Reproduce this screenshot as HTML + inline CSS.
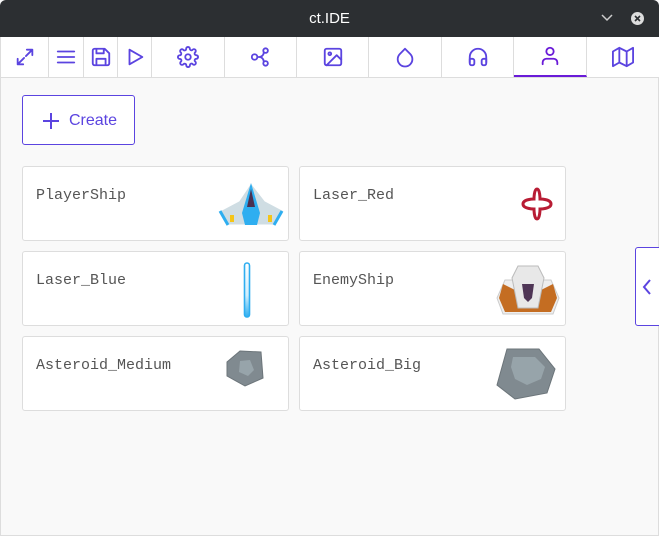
<!DOCTYPE html><html><head><style>
*{margin:0;padding:0;box-sizing:border-box}
body{width:659px;height:536px;background:#f9f9f9;font-family:"Liberation Sans",sans-serif;position:relative;overflow:hidden}
.title{position:absolute;left:0;top:0;width:659px;height:37px;background:#2c2f32;border-radius:6px 6px 0 0;color:#fff;font-size:15px;text-align:center;line-height:37px}
.tabs{position:absolute;top:37px;left:0;width:659px;height:41px;background:#fff;border-bottom:1px solid #ddd}
.t{position:absolute;top:0;height:40px;border-right:1px solid #ddd;display:flex;align-items:center;justify-content:center}
.t svg{width:22px;height:22px;fill:none;stroke:#5b44e0;stroke-width:2;stroke-linecap:round;stroke-linejoin:round}
.card{position:absolute;width:267px;height:75px;background:#fff;border:1px solid #ddd;border-radius:3px}
.card span{position:absolute;left:13px;top:20px;font-family:"Liberation Mono","DejaVu Sans Mono",monospace;font-size:15px;color:#555}
.card svg{position:absolute;right:4px;top:12px}
</style></head><body>
<div class="title">ct.IDE
<svg style="position:absolute;left:601px;top:14px" width="12" height="8"><path d="M1 1l5 5 5-5" stroke="#ccc" stroke-width="1.5" fill="none"/></svg>
<svg style="position:absolute;left:631px;top:12px" width="13" height="13"><circle cx="6.5" cy="6.5" r="6.5" fill="#ddd"/><path d="M4 4l5 5M9 4l-5 5" stroke="#2c2f32" stroke-width="1.6"/></svg>
</div>
<div class="tabs">
<div class="t" style="left:0;width:49px;border-left:1px solid #ddd"><svg viewBox="0 0 24 24"><path d="M14 4h6v6M20 4l-7 7M10 20H4v-6M4 20l7-7"/></svg></div>
<div class="t" style="left:49px;width:35px"><svg viewBox="0 0 24 24"><path d="M3 6h18M3 12h18M3 18h18"/></svg></div>
<div class="t" style="left:84px;width:34px"><svg viewBox="0 0 24 24"><path d="M5 3h11l5 5v11a2 2 0 0 1-2 2H5a2 2 0 0 1-2-2V5a2 2 0 0 1 2-2zM7 3v5h8V3M7 21v-7h10v7"/></svg></div>
<div class="t" style="left:118px;width:34px"><svg viewBox="0 0 24 24"><path d="M6 4l14 8-14 8z"/></svg></div>
<div class="t" style="left:152px;width:73px"><svg viewBox="0 0 24 24"><circle cx="12" cy="12" r="3"/><path d="M19.4 15a1.7 1.7 0 0 0 .3 1.8l.1.1a2 2 0 1 1-2.8 2.8l-.1-.1a1.7 1.7 0 0 0-1.8-.3 1.7 1.7 0 0 0-1 1.5V21a2 2 0 1 1-4 0v-.1a1.7 1.7 0 0 0-1.1-1.5 1.7 1.7 0 0 0-1.8.3l-.1.1a2 2 0 1 1-2.8-2.8l.1-.1a1.7 1.7 0 0 0 .3-1.8 1.7 1.7 0 0 0-1.5-1H3a2 2 0 1 1 0-4h.1a1.7 1.7 0 0 0 1.5-1.1 1.7 1.7 0 0 0-.3-1.8l-.1-.1a2 2 0 1 1 2.8-2.8l.1.1a1.7 1.7 0 0 0 1.8.3H9a1.7 1.7 0 0 0 1-1.5V3a2 2 0 1 1 4 0v.1a1.7 1.7 0 0 0 1 1.5 1.7 1.7 0 0 0 1.8-.3l.1-.1a2 2 0 1 1 2.8 2.8l-.1.1a1.7 1.7 0 0 0-.3 1.8V9a1.7 1.7 0 0 0 1.5 1H21a2 2 0 1 1 0 4h-.1a1.7 1.7 0 0 0-1.5 1z"/></svg></div>
<div class="t" style="left:225px;width:72px"><svg viewBox="0 0 24 24"><circle cx="5" cy="12" r="3"/><circle cx="17" cy="5" r="2.5"/><circle cx="17" cy="19" r="2.5"/><path d="M8 12h2a5 5 0 0 0 5-5M10 12a5 5 0 0 1 5 5"/></svg></div>
<div class="t" style="left:297px;width:72px"><svg viewBox="0 0 24 24"><rect x="3" y="3" width="18" height="18" rx="2"/><circle cx="8.5" cy="8.5" r="1.5"/><path d="M21 15l-5-5L5 21"/></svg></div>
<div class="t" style="left:369px;width:73px"><svg viewBox="0 0 24 24"><path d="M12 3l5.7 5.7a8 8 0 1 1-11.3 0z"/></svg></div>
<div class="t" style="left:442px;width:72px"><svg viewBox="0 0 24 24"><path d="M3 18v-6a9 9 0 0 1 18 0v6"/><path d="M21 19a2 2 0 0 1-2 2h-1a2 2 0 0 1-2-2v-3a2 2 0 0 1 2-2h3zM3 19a2 2 0 0 0 2 2h1a2 2 0 0 0 2-2v-3a2 2 0 0 0-2-2H3z"/></svg></div>
<div class="t" style="left:514px;width:73px;border-bottom:2px solid #6a1bd8"><svg viewBox="0 0 24 24" style="stroke:#6a1bd8"><path d="M20 21v-2a4 4 0 0 0-4-4H8a4 4 0 0 0-4 4v2"/><circle cx="12" cy="7" r="4"/></svg></div>
<div class="t" style="left:587px;width:72px;border-right:none"><svg viewBox="0 0 24 24"><path d="M1 6v16l7-4 8 4 7-4V2l-7 4-8-4-7 4zM8 2v16M16 6v16"/></svg></div>
</div>
<div style="position:absolute;left:0;top:78px;width:1px;height:458px;background:#ddd"></div>
<div style="position:absolute;right:0;top:78px;width:1px;height:458px;background:#ddd"></div>
<div style="position:absolute;left:0;bottom:0;width:659px;height:1px;background:#ddd"></div>
<div style="position:absolute;left:22px;top:95px;width:113px;height:50px;border:1px solid #5b44e0;border-radius:3px;background:#fff;color:#5b44e0;font-size:16px;line-height:49px;padding-left:46px">Create
<svg style="position:absolute;left:19px;top:16px" width="18" height="18"><path d="M9 1v16M1 9h16" stroke="#5b44e0" stroke-width="2"/></svg></div>
<div class="card" style="left:22px;top:166px"><span>PlayerShip</span><svg width="66" height="50" viewBox="0 0 66 50"><path d="M33 4l-12 18-19 10 8 14h48l8-14-19-10z" fill="#cfdde3" stroke="#fff"/><path d="M33 4l-9 30 3 12h12l3-12z" fill="#2eaef0"/><path d="M33 10l-4 18h8z" fill="#4a3050"/><rect x="12" y="36" width="4" height="7" fill="#f5c518"/><rect x="50" y="36" width="4" height="7" fill="#f5c518"/><path d="M2 32l8 14M64 32l-8 14" stroke="#2eaef0" stroke-width="3"/></svg></div>
<div class="card" style="left:299px;top:166px"><span>Laser_Red</span><svg width="66" height="50" viewBox="0 0 66 50"><path d="M42 10c-3 0-3 10-3 10s-11 0-11 5 11 5 11 5 0 10 3 10 3-10 3-10 11 0 11-5-11-5-11-5 0-10-3-10z" fill="#fff" stroke="#b81c34" stroke-width="3"/></svg></div>
<div class="card" style="left:22px;top:251px"><span>Laser_Blue</span><svg width="66" height="60" viewBox="0 0 66 60" style="top:8px"><defs><linearGradient id="g" x1="0" y1="0" x2="0" y2="1"><stop offset="0" stop-color="#fff"/><stop offset="0.6" stop-color="#cfeefd"/><stop offset="1" stop-color="#2eaef0"/></linearGradient></defs><rect x="26.5" y="3" width="5" height="54" rx="2.5" fill="url(#g)" stroke="#2eaef0" stroke-width="1.6"/></svg></div>
<div class="card" style="left:299px;top:251px"><span>EnemyShip</span><svg width="66" height="56" viewBox="0 0 66 56" style="top:10px"><path d="M10 18l-8 18 6 16h50l6-16-8-18z" fill="#eee" stroke="#ccc"/><path d="M8 22l-4 14 6 14h46l6-14-4-14-12 6H20z" fill="#c46d22"/><path d="M23 4h20l6 12-6 30H23L17 16z" fill="#e8e8e8" stroke="#bbb"/><path d="M27 22h12l-2 14-4 4-4-4z" fill="#4f3656"/></svg></div>
<div class="card" style="left:22px;top:336px"><span>Asteroid_Medium</span><svg width="66" height="56" viewBox="0 0 66 56" style="top:8px"><path d="M22 6l21 1 2 26-18 8-18-10 0-14z" fill="#808a90" stroke="#6c757a"/><path d="M22 16l10-1 4 10-6 6-9-4z" fill="#97a4aa"/></svg></div>
<div class="card" style="left:299px;top:336px"><span>Asteroid_Big</span><svg width="66" height="56" viewBox="0 0 66 56" style="top:8px"><path d="M12 4h32l16 20-8 24-32 6-18-14z" fill="#808a90" stroke="#6c757a"/><path d="M18 12h22l10 10-4 12-14 6-12-6-4-12z" fill="#97a4aa"/></svg></div>
<div style="position:absolute;left:635px;top:247px;width:30px;height:79px;border:1px solid #5b44e0;border-radius:3px;background:#fff">
<svg style="position:absolute;left:6px;top:31px" width="10" height="16"><path d="M8 1L2 8l6 7" stroke="#5b44e0" stroke-width="2" fill="none"/></svg></div>
</body></html>
